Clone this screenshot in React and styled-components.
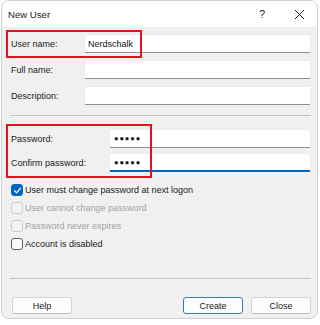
import styled, { createGlobalStyle } from 'styled-components';

const GlobalStyle = createGlobalStyle`
  body {
    margin: 0;
    background: #ffffff;
    font-family: "Liberation Sans", Arial, sans-serif;
  }
`;

const textFields = [
    { label: "User name:", value: "Nerdschalk" },
    { label: "Full name:", value: "" },
    { label: "Description:", value: "" },
];

const passwordFields = [
    { label: "Password:", focused: false },
    { label: "Confirm password:", focused: true },
];

const options = [
    { label: "User must change password at next logon", checked: true, disabled: false },
    { label: "User cannot change password", checked: false, disabled: true },
    { label: "Password never expires", checked: false, disabled: true },
    { label: "Account is disabled", checked: false, disabled: false },
];

const App = () => {
    return (
        <>
            <GlobalStyle />
            <WindowStyled>
                <TitleBar>
                    <Title>New User</Title>
                    <TitleButtons>
                        <TitleButton $width={38}>?</TitleButton>
                        <TitleButton $width={36}>
                            <svg width="11" height="11" viewBox="0 0 11 11">
                                <path d="M1 1L10 10M10 1L1 10" stroke="#1a1a1a" strokeWidth="1" fill="none" />
                            </svg>
                        </TitleButton>
                    </TitleButtons>
                </TitleBar>

                <Body>
                    <FieldGroup $labelWidth={74} $gap={7}>
                        {textFields.map(field => (
                            <FieldRow key={field.label}>
                                <Label>{field.label}</Label>
                                <Field>{field.value}</Field>
                            </FieldRow>
                        ))}
                    </FieldGroup>

                    <Separator $top={10} $bottom={13} />

                    <FieldGroup $labelWidth={99} $gap={5}>
                        {passwordFields.map(field => (
                            <FieldRow key={field.label}>
                                <Label>{field.label}</Label>
                                <Field $focused={field.focused}><Dots>●●●●●</Dots></Field>
                            </FieldRow>
                        ))}
                    </FieldGroup>

                    <OptionList>
                        {options.map(option => (
                            <OptionRow key={option.label} $disabled={option.disabled}>
                                <CheckBox $checked={option.checked} $disabled={option.disabled}>
                                    {option.checked && (
                                        <svg width="9" height="9" viewBox="0 0 9 9">
                                            <path d="M1.5 4.8L3.6 6.8L7.6 2.2" stroke="#ffffff" strokeWidth="1.2" fill="none" strokeLinecap="round" strokeLinejoin="round" />
                                        </svg>
                                    )}
                                </CheckBox>
                                {option.label}
                            </OptionRow>
                        ))}
                    </OptionList>

                    <Separator $top={28} $bottom={18} />

                    <ButtonRow>
                        <Button>Help</Button>
                        <Spacer />
                        <Button $primary>Create</Button>
                        <Button>Close</Button>
                    </ButtonRow>
                </Body>

                {/* annotation boxes drawn over the dialog */}
                <Highlight $left={4} $top={29} $width={136} $height={28} />
                <Highlight $left={4} $top={123} $width={146} $height={54} />
            </WindowStyled>
        </>
    )
}

const WindowStyled = styled.div`
position: relative;
box-sizing: border-box;
width: 317px;
height: 319px;
margin-left: 1px;
border: 1px solid #cfcfcf;
border-radius: 8px;
overflow: hidden;
background: #f0f0f0;
display: flex;
flex-direction: column;
color: #1a1a1a;
font-size: 9px;
`;

const TitleBar = styled.div`
height: 26px;
background: #ffffff;
display: flex;
align-items: center;
justify-content: space-between;
padding-left: 6px;
`;

const Title = styled.span`
font-size: 9.6px;
color: #1a1a1a;
`;

const TitleButtons = styled.div`
display: flex;
align-items: center;
height: 100%;
`;

const TitleButton = styled.div`
width: ${props => props.$width}px;
height: 100%;
display: flex;
align-items: center;
justify-content: center;
font-size: 11px;
color: #1a1a1a;
`;

const Body = styled.div`
display: flex;
flex-direction: column;
padding: 7px 6px 0 8px;
`;

const FieldGroup = styled.div`
display: flex;
flex-direction: column;
gap: ${props => props.$gap}px;

& > div {
  grid-template-columns: ${props => props.$labelWidth}px 1fr;
}
`;

const FieldRow = styled.div`
display: grid;
align-items: center;
height: 19px;
`;

const Label = styled.span`
padding-left: 1px;
white-space: nowrap;
`;

const Field = styled.div`
box-sizing: border-box;
height: 19px;
background: #ffffff;
border: 1px solid #ececec;
border-bottom: ${props => props.$focused ? '2px solid #0067c0' : '1px solid #8d8d8d'};
border-radius: 2px;
display: flex;
align-items: center;
padding-left: 3px;
font-size: 9px;
color: #111;
`;

const Dots = styled.span`
font-size: 7.5px;
letter-spacing: 0.9px;
padding-left: 1px;
`;

const Separator = styled.div`
height: 1px;
background: #c4c4c4;
margin: ${props => props.$top}px 0 ${props => props.$bottom}px;
`;

const OptionList = styled.div`
display: flex;
flex-direction: column;
gap: 6px;
margin-top: 12px;
padding-left: 1px;
`;

const OptionRow = styled.div`
display: flex;
align-items: center;
gap: 2px;
height: 12px;
color: ${props => props.$disabled ? '#a3a3a3' : '#1a1a1a'};
white-space: nowrap;
`;

const CheckBox = styled.span`
box-sizing: border-box;
width: 12px;
height: 12px;
border-radius: 3px;
display: flex;
align-items: center;
justify-content: center;
background: ${props => props.$checked ? '#0067c0' : props.$disabled ? '#f3f3f3' : '#f9f9f9'};
border: 1px solid ${props => props.$checked ? '#0067c0' : props.$disabled ? '#cdcdcd' : '#5c5c5c'};
`;

const ButtonRow = styled.div`
display: flex;
gap: 8px;
padding-left: 2px;
`;

const Spacer = styled.div`
flex: 1;
`;

const Button = styled.div`
box-sizing: border-box;
width: 60px;
height: 17px;
display: flex;
align-items: center;
justify-content: center;
background: #fdfdfd;
border: 1px solid ${props => props.$primary ? '#3b78b8' : '#d3d3d3'};
border-bottom-color: ${props => props.$primary ? '#3b78b8' : '#bdbdbd'};
border-radius: 3px;
font-size: 9px;
color: #1a1a1a;
`;

const Highlight = styled.div`
position: absolute;
left: ${props => props.$left}px;
top: ${props => props.$top}px;
width: ${props => props.$width}px;
height: ${props => props.$height}px;
box-sizing: border-box;
border: 2px solid #e3131b;
pointer-events: none;
`;

export default App;
